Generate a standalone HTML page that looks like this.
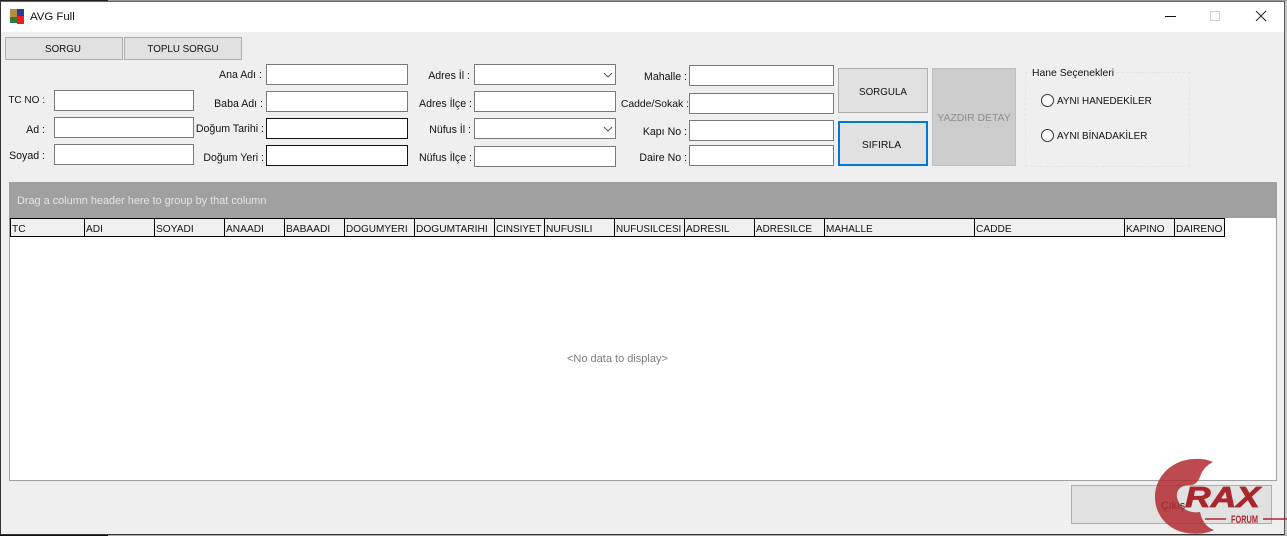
<!DOCTYPE html>
<html lang="tr"><head><meta charset="utf-8"><title>AVG Full</title>
<style>
html,body{margin:0;padding:0;width:1287px;height:536px;overflow:hidden;background:#c8c8c8}
body{position:relative;font-family:"Liberation Sans",sans-serif;font-size:10.6px;color:#111}
div,span{position:absolute;box-sizing:border-box;white-space:nowrap}
#win{left:0;top:1px;width:1285px;height:534px;background:#efefef;border:1px solid #555;border-top:1px solid #666;border-left:1px solid #333;border-bottom:1px solid #333}
#title{left:1px;top:2px;width:1283px;height:30px;background:#fff}
.i{background:#fff;border:1px solid #7a7a7a;height:21px}
.d{border-color:#111}
.l{text-align:right;height:14px;line-height:14px;margin-top:1px}
.b{background:#e1e1e1;border:1px solid #adadad;text-align:center;display:flex;align-items:center;justify-content:center;padding-top:2px;font-size:10px}
.h{top:218px;height:19px;background:#f0f0f0;border:1px solid #000;margin-right:-1px;line-height:20px;padding-top:1px;padding-left:1px;overflow:hidden;font-size:10.2px}
.r{width:13px;height:13px;border-radius:50%;border:1px solid #333;background:#fff}
</style></head><body>
<div style="left:0;top:0;width:108px;height:1px;background:#222"></div>
<div style="left:108px;top:0;width:1179px;height:1px;background:#999"></div>
<div style="left:0;top:535px;width:108px;height:1px;background:#111"></div>
<div style="left:108px;top:535px;width:1179px;height:1px;background:#aaa"></div>
<div id="win"></div>
<div id="title"></div>
<svg style="position:absolute;left:10px;top:9px" width="14" height="15" viewBox="0 0 14 15"><rect width="7" height="8" fill="#b98a3a"/><rect x="7" width="7" height="8" fill="#1f3f9a"/><rect y="8" width="7" height="6" fill="#2f7a35"/><rect x="7" y="7" width="7" height="8" fill="#ee1c25"/></svg>
<div style="left:30px;top:10px;font-size:11.4px;line-height:14px;color:#111">AVG Full</div>
<div style="left:1165px;top:16px;width:11px;height:1px;background:#111"></div>
<div style="left:1210px;top:11px;width:10px;height:10px;border:1px solid #ccc"></div>
<svg style="position:absolute;left:1255px;top:10px" width="12" height="12" viewBox="0 0 12 12"><path d="M1 1L11 11M11 1L1 11" stroke="#222" stroke-width="1" fill="none"/></svg>

<div class="b" style="left:5px;top:37px;width:118px;height:23px;font-size:9.8px;padding-right:2px">SORGU</div>
<div class="b" style="left:124px;top:37px;width:118px;height:23px;font-size:9.8px">TOPLU SORGU</div>

<div class="l" style="left:0;width:45px;top:93px;font-size:10px">TC NO :</div>
<div class="l" style="left:0;width:45px;top:122px">Ad :</div>
<div class="l" style="left:0;width:45px;top:148px">Soyad :</div>
<div class="i" style="left:54px;top:90px;width:140px"></div>
<div class="i" style="left:54px;top:117px;width:140px"></div>
<div class="i" style="left:54px;top:144px;width:140px"></div>

<div class="l" style="left:180px;width:82px;top:67px">Ana Adı :</div>
<div class="l" style="left:180px;width:83px;top:96px">Baba Adı :</div>
<div class="l" style="left:180px;width:84px;top:121px">Doğum Tarihi :</div>
<div class="l" style="left:180px;width:84px;top:150px">Doğum Yeri :</div>
<div class="i" style="left:266px;top:64px;width:142px"></div>
<div class="i" style="left:266px;top:91px;width:142px"></div>
<div class="i d" style="left:266px;top:118px;width:142px"></div>
<div class="i d" style="left:266px;top:145px;width:142px"></div>

<div class="l" style="left:400px;width:70px;top:68px">Adres İl :</div>
<div class="l" style="left:400px;width:72px;top:96px">Adres İlçe :</div>
<div class="l" style="left:400px;width:71px;top:122px">Nüfus İl :</div>
<div class="l" style="left:400px;width:72px;top:150px">Nüfus İlçe :</div>
<div class="i" style="left:474px;top:64px;width:142px"></div>
<div class="i" style="left:474px;top:91px;width:142px"></div>
<div class="i" style="left:474px;top:118px;width:142px"></div>
<div class="i" style="left:474px;top:146px;width:142px"></div>
<svg style="position:absolute;left:603px;top:72px" width="10" height="6" viewBox="0 0 10 6"><path d="M1 1L5 5L9 1" stroke="#555" fill="none"/></svg>
<svg style="position:absolute;left:603px;top:126px" width="10" height="6" viewBox="0 0 10 6"><path d="M1 1L5 5L9 1" stroke="#555" fill="none"/></svg>

<div class="l" style="left:600px;width:87px;top:69px">Mahalle :</div>
<div class="l" style="left:600px;width:89px;top:97px;font-size:10.4px">Cadde/Sokak :</div>
<div class="l" style="left:600px;width:87px;top:124px">Kapı No :</div>
<div class="l" style="left:600px;width:87px;top:150px">Daire No :</div>
<div class="i" style="left:689px;top:65px;width:145px"></div>
<div class="i" style="left:689px;top:93px;width:145px"></div>
<div class="i" style="left:689px;top:120px;width:145px"></div>
<div class="i" style="left:689px;top:145px;width:145px"></div>

<div class="b" style="left:838px;top:68px;width:90px;height:45px;font-size:9.8px;padding-top:4px">SORGULA</div>
<div class="b" style="left:838px;top:121px;width:90px;height:45px;border:2px solid #0078d7;font-size:10.4px;padding-top:4px;padding-right:3px">SIFIRLA</div>
<div class="b" style="left:932px;top:68px;width:84px;height:98px;background:#ccc;border-color:#bfbfbf;color:#8d8d8d;font-size:10.4px">YAZDIR DETAY</div>

<div style="left:1025px;top:72px;width:165px;height:95px;border:1px dashed #e4e4e4"></div>
<div style="left:1032px;top:67px;height:14px;line-height:14px;background:#efefef;padding-right:1px;font-size:10.4px">Hane Seçenekleri</div>
<div class="r" style="left:1041px;top:94px"></div>
<div style="left:1057px;top:95px;line-height:14px;font-size:9.9px">AYNI HANEDEKİLER</div>
<div class="r" style="left:1041px;top:129px"></div>
<div style="left:1057px;top:130px;line-height:14px;font-size:9.9px">AYNI BİNADAKİLER</div>

<div style="left:9px;top:182px;width:1268px;height:299px;background:#fff;border:1px solid #a0a0a0;border-top:0"></div>
<div style="left:9px;top:182px;width:1268px;height:36px;background:#a0a0a0"></div>
<div style="left:17px;top:194px;line-height:14px;color:#e4e4e4;font-size:10.9px">Drag a column header here to group by that column</div>

<div class="h" style="left:10px;width:75px">TC</div>
<div class="h" style="left:84px;width:71px">ADI</div>
<div class="h" style="left:154px;width:71px">SOYADI</div>
<div class="h" style="left:224px;width:61px">ANAADI</div>
<div class="h" style="left:284px;width:61px">BABAADI</div>
<div class="h" style="left:344px;width:71px;font-size:10px">DOGUMYERI</div>
<div class="h" style="left:414px;width:81px">DOGUMTARIHI</div>
<div class="h" style="left:494px;width:51px;font-size:9.9px">CINSIYET</div>
<div class="h" style="left:544px;width:71px">NUFUSILI</div>
<div class="h" style="left:614px;width:71px;font-size:9.9px">NUFUSILCESI</div>
<div class="h" style="left:684px;width:71px">ADRESIL</div>
<div class="h" style="left:754px;width:71px;font-size:9.9px">ADRESILCE</div>
<div class="h" style="left:824px;width:151px;font-size:10px">MAHALLE</div>
<div class="h" style="left:974px;width:151px">CADDE</div>
<div class="h" style="left:1124px;width:51px">KAPINO</div>
<div class="h" style="left:1174px;width:51px;font-size:10.2px">DAIRENO</div>

<div style="left:567px;top:352px;line-height:14px;color:#7d7d7d;font-size:11px">&lt;No data to display&gt;</div>

<div style="left:1071px;top:485px;width:201px;height:39px;background:#e1e1e1;border:1px solid #adadad"></div>
<div style="left:1161px;top:499px;line-height:14px;color:#222">Çıkış</div>

<svg style="position:absolute;left:1150px;top:455px" width="137" height="81" viewBox="0 0 137 81">
<path d="M63 7C55 3 42 3 32 6C15 12 5 26 5 42C5 58 15 72 32 77C44 80 56 79 64 75C56 72 52 66 50 57C38 59 29 52 27 42C26 34 32 30 40 30C46 30 48 26 50 22C52 15 57 10 63 7Z" fill="#b02a30" fill-opacity=".85"/>
<text x="0" y="0" transform="translate(35 52) scale(1 1.25)" font-family="Liberation Sans" font-weight="700" font-style="italic" font-size="23" textLength="75" lengthAdjust="spacingAndGlyphs" fill="#a8272d" stroke="#a8272d" stroke-width=".6">RAX</text>
<path d="M55 64H76M113 64H137" stroke="#a8272d" stroke-width="1.5" fill="none"/>
<text x="81" y="68" font-family="Liberation Sans" font-weight="700" font-size="11" textLength="27" lengthAdjust="spacingAndGlyphs" fill="#a8272d">FORUM</text>
</svg>
</body></html>
